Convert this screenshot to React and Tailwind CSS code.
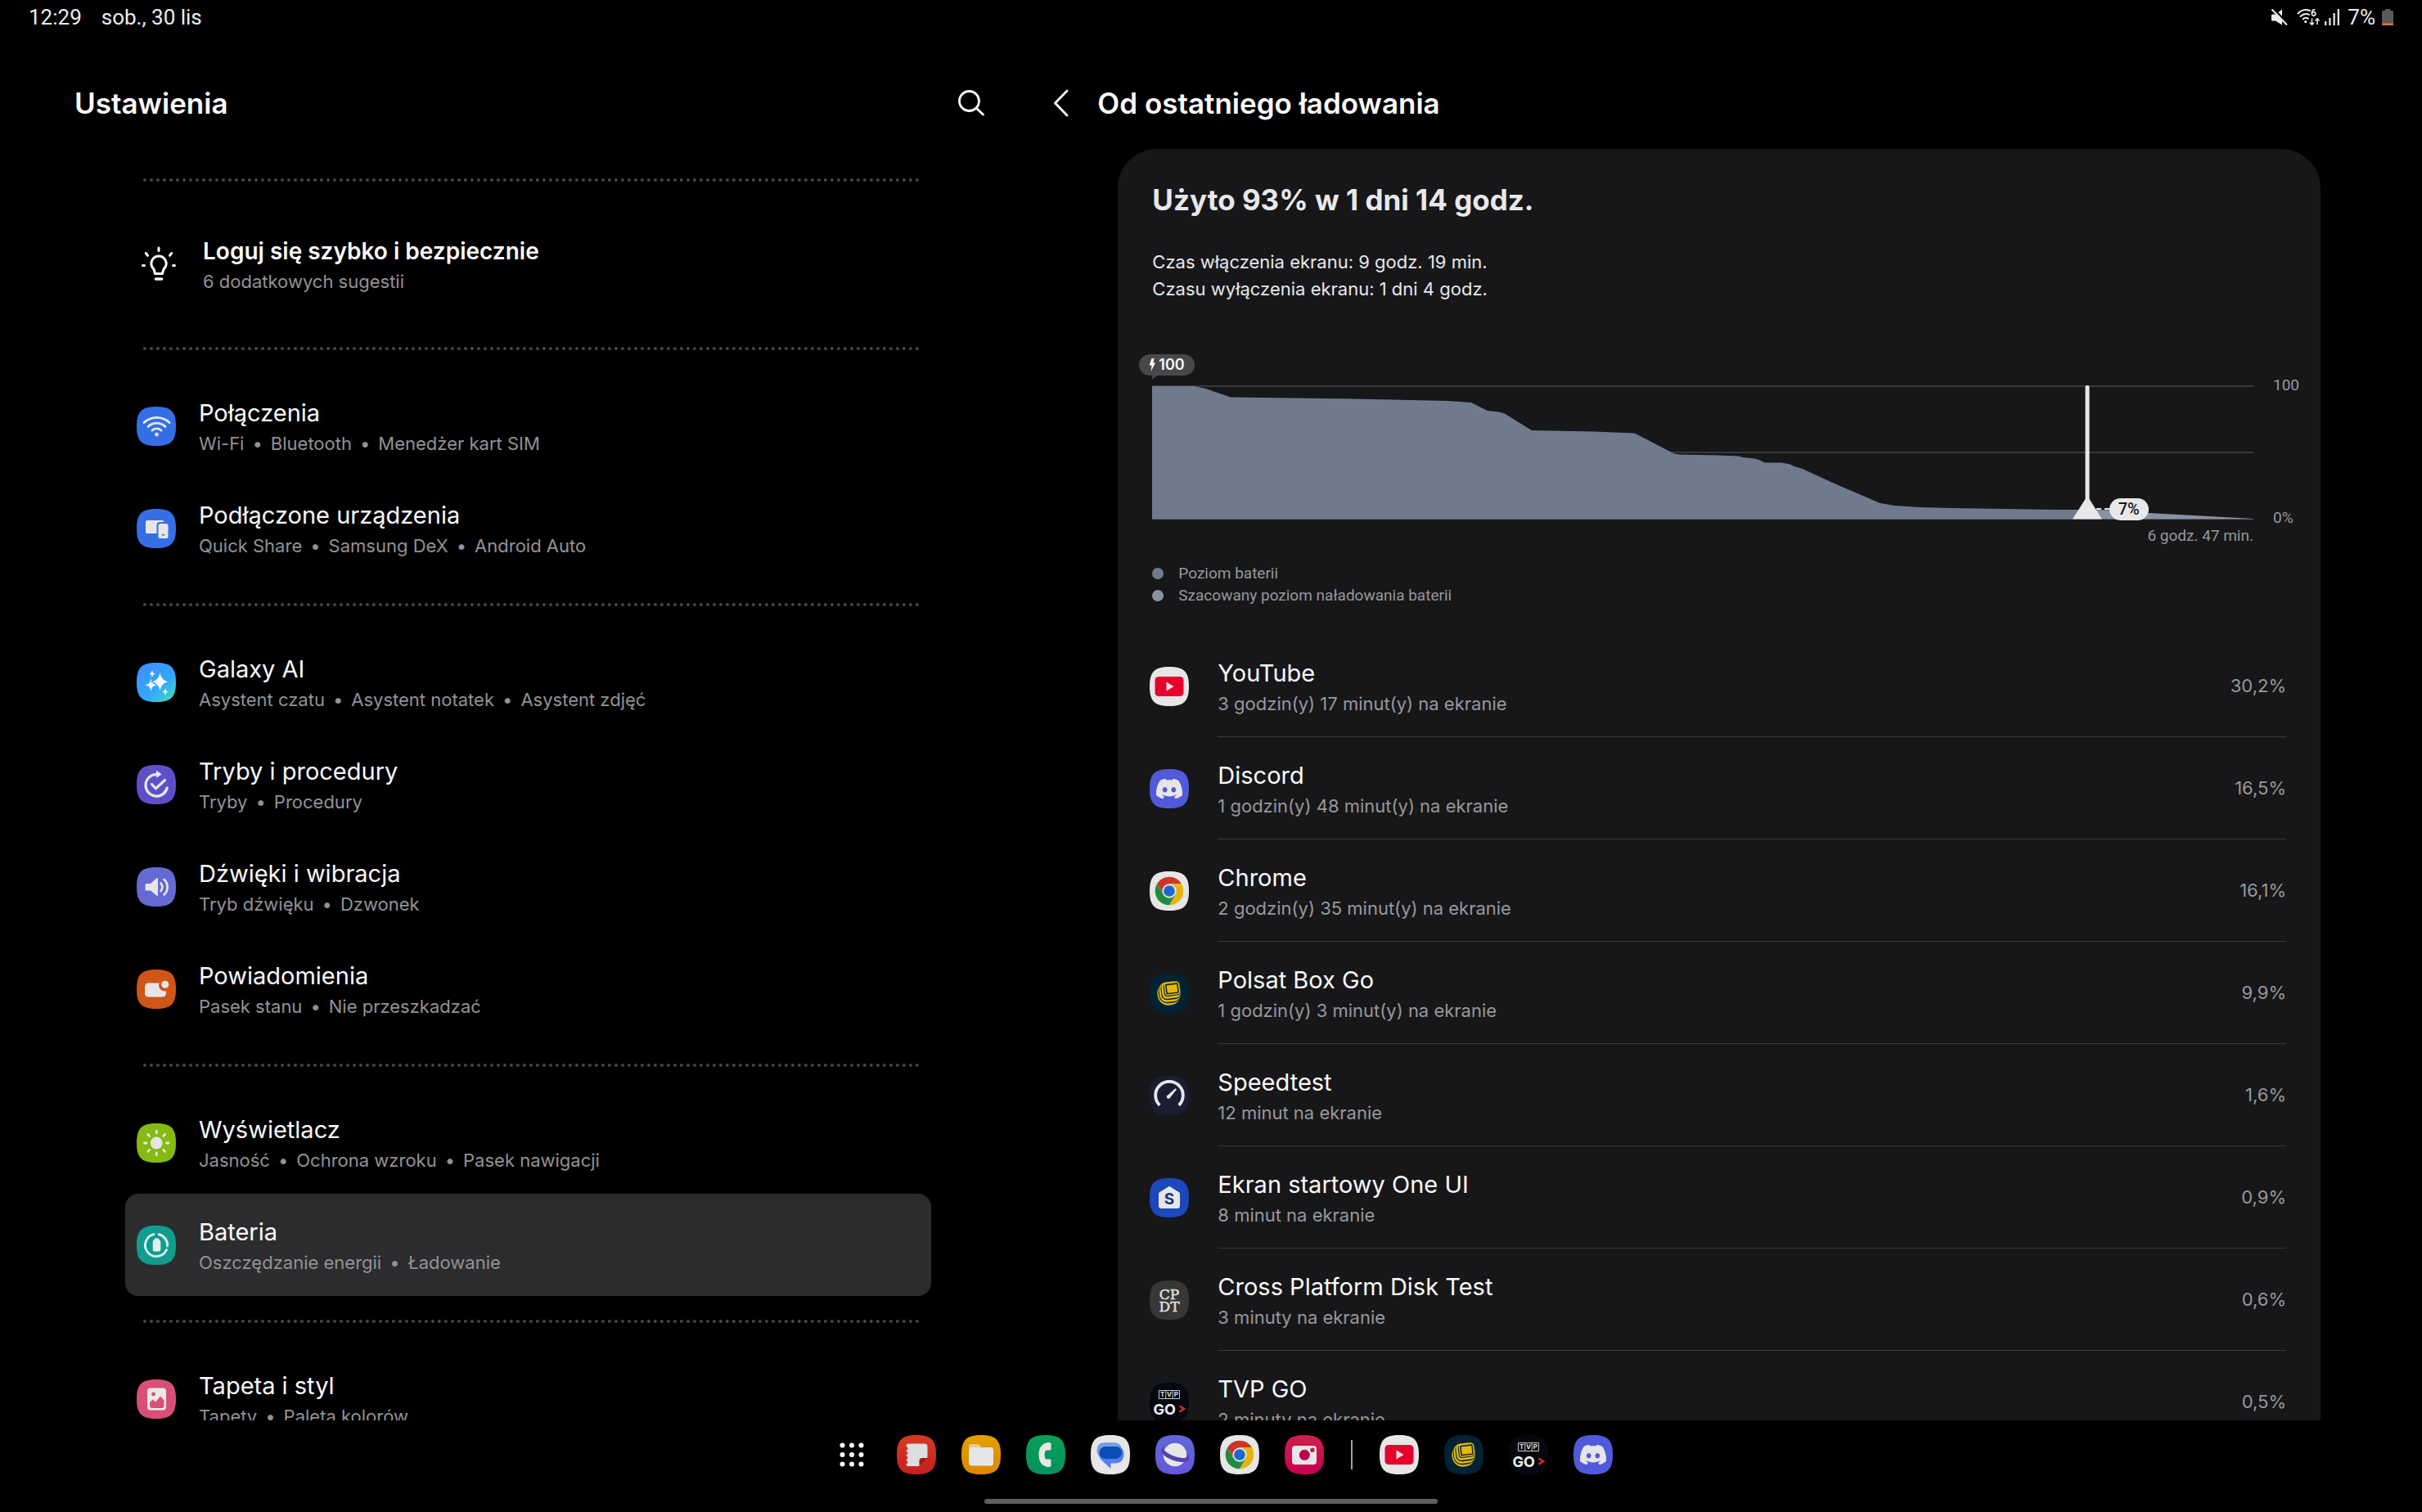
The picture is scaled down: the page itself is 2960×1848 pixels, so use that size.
import React from "react";
import { SiDiscord } from "react-icons/si";

const SQUIRCLE = "M24 0C42 0 48 6 48 24S42 48 24 48 0 42 0 24 6 0 24 0Z";

function Squircle({ fill, children }) {
  return (
    <svg viewBox="0 0 48 48" className="size-12 shrink-0" aria-hidden="true">
      <path d={SQUIRCLE} fill={fill} />
      {children}
    </svg>
  );
}

/* ---------- settings icons ---------- */

const WifiIcon = () => (
  <Squircle fill="#356fe6">
    <g fill="none" stroke="#e8e8ea" strokeWidth="2.8" strokeLinecap="round">
      <path d="M9 19.6C17.5 11.4 31.500 11.400 40 19.600" />
      <path d="M14 24.400C20 18.700 29 18.700 35 24.400" />
      <path d="M19 29C22.300 26.200 26.700 26.200 30 29" />
    </g>
    <circle cx="24.500" cy="34" r="2.400" fill="#e8e8ea" />
  </Squircle>
);

const DevicesIcon = () => (
  <Squircle fill="#356fe6">
    <rect x="11" y="14" width="22" height="16" rx="1.5" fill="#e6e6e8" />
    <rect x="24.500" y="16" width="16" height="22" rx="4" fill="#356fe6" />
    <rect x="26.500" y="18" width="12" height="18" rx="2.500" fill="#e6e6e8" />
    <rect x="30.500" y="31" width="4" height="1.600" rx="0.8" fill="#356fe6" />
  </Squircle>
);

const GalaxyAiIcon = () => (
  <Squircle fill="url(#galaxy-ai)">
    <defs>
      <linearGradient id="galaxy-ai" x1="0.1" y1="0" x2="0.9" y2="1">
        <stop offset="0" stopColor="#3f8dff" />
        <stop offset="0.6" stopColor="#30a8ff" />
        <stop offset="1" stopColor="#45dcb8" />
      </linearGradient>
    </defs>
    <g fill="#f2f8ff">
      <path d="M17.500 19.500C18.900 25 19.500 26 25 27.300 19.500 28.600 18.900 29.600 17.500 35 16.100 29.600 15.500 28.600 10 27.300 15.500 26 16.100 25 17.500 19.500Z" />
      <path d="M28.500 11C31 19.500 32 20.800 39.500 23.300 32 25.800 31 27.100 28.500 35.500 26 27.100 25 25.800 17.500 23.300 25 20.800 26 19.500 28.500 11Z" stroke="#34a0ff" strokeWidth="1" />
      <path d="M19 9C19.900 12.300 20.400 12.800 23.200 13.500 20.400 14.200 19.900 14.700 19 18 18.100 14.700 17.600 14.200 14.800 13.500 17.600 12.800 18.100 12.300 19 9Z" />
      <path d="M35 31C35.900 34.300 36.400 34.800 39.200 35.500 36.400 36.200 35.900 36.700 35 40 34.100 36.700 33.600 36.200 30.800 35.500 33.600 34.800 34.100 34.300 35 31Z" />
    </g>
  </Squircle>
);

const RoutinesIcon = () => (
  <Squircle fill="#5e4fc9">
    <g fill="none" stroke="#e6e6ea" strokeWidth="3.200" strokeLinecap="round" strokeLinejoin="round">
      <path d="M24 11.500A13.300 13.300 0 1 0 37.200 28" />
      <path d="M18.500 23.500 23.300 28.800 34.500 18.500" />
    </g>
    <path d="M24.500 7.500 30 11.300 24.500 15Z" fill="#e6e6ea" stroke="#e6e6ea" strokeLinejoin="round" />
  </Squircle>
);

const SoundIcon = () => (
  <Squircle fill="#6469d3">
    <path d="M10.500 21.500Q10.500 20 12 20H17L24.500 13.200Q26 12.300 26 14V34Q26 35.700 24.500 34.800L17 28.500H12Q10.500 28.500 10.500 27Z" fill="#e6e6ea" />
    <g fill="none" stroke="#e6e6ea" strokeWidth="2.600" strokeLinecap="round">
      <path d="M29.500 19.500C32 22 32 26.500 29.500 29" />
      <path d="M33.500 15C39 20 39 28.500 33.500 33.500" />
    </g>
  </Squircle>
);

const NotificationsIcon = () => (
  <Squircle fill="#d05518">
    <rect x="10" y="16.500" width="26" height="17" rx="4.500" fill="#e6e6e6" />
    <circle cx="34.500" cy="19" r="7.500" fill="#d05518" />
    <circle cx="34.800" cy="18.300" r="4.500" fill="#e6e6e6" />
  </Squircle>
);

const DisplayIcon = () => (
  <Squircle fill="#86b912">
    <circle cx="24.200" cy="24" r="7.400" fill="#e6e6e6" />
    <g stroke="#e6e6e6" strokeWidth="2.800" strokeLinecap="round">
      <path d="M24.200 9.500V12M24.200 36V38.500M9.500 24H12M36.400 24H39M13.800 13.600 15.600 15.400M32.800 32.600 34.600 34.400M34.600 13.600 32.800 15.400M15.600 32.600 13.800 34.400" />
    </g>
  </Squircle>
);

const BatteryIcon = () => (
  <Squircle fill="#119d8e">
    <g fill="none" stroke="#e2f0ee" strokeWidth="2.800" strokeLinecap="round">
      <path d="M21 10.700A13.600 13.600 0 1 0 36.500 29.500" />
      <path d="M27 10.700A13.600 13.600 0 0 1 37.600 25" />
    </g>
    <path d="M21.500 17.600V17Q21.500 15.600 23 15.600H26Q27.500 15.600 27.500 17V17.600Q29.300 18 29.300 20V29.500Q29.300 31.600 27.200 31.600H21.800Q19.700 31.600 19.700 29.500V20Q19.700 18 21.500 17.600Z" fill="#e2f0ee" />
  </Squircle>
);

const WallpaperIcon = () => (
  <Squircle fill="#d85077">
    <rect x="13" y="10.500" width="23" height="27" rx="4" fill="#eaeaea" />
    <circle cx="20.500" cy="18" r="2.400" fill="#d85077" />
    <path d="M16 31.500V28L19.800 24.500 23 27.500 29 20.500 33.500 25.500V32Q33.500 35 30.500 35H19Q16 35 16 31.500Z" fill="#d85077" />
  </Squircle>
);

const BulbIcon = () => (
  <svg viewBox="0 0 48 48" className="size-12 shrink-0" aria-hidden="true">
    <g fill="none" stroke="#fafafa" strokeWidth="3" strokeLinecap="round" strokeLinejoin="round">
      <path d="M19.500 34.500 18.200 29.500C15.800 27 14.800 24.800 14.800 22.300A9.200 9.200 0 0 1 33.200 22.300C33.200 24.800 32.200 27 29.800 29.500L28.500 34.500Z" />
      <path d="M24 3V6.500M8.300 9.500 10.500 12.300M39.700 9.500 37.500 12.300M4.500 24.500H6.500M41.500 24.500H43.500" />
      <path d="M20.500 41H27.500" strokeWidth="3.600" />
    </g>
  </svg>
);

/* ---------- app icons ---------- */

const YouTubeIcon = () => (
  <Squircle fill="#e6e6e6">
    <rect x="6.500" y="12" width="35" height="24" rx="4.500" fill="#e8002d" />
    <path d="M20.500 18.600V29.400L29.500 24Z" fill="#f4dfe3" />
  </Squircle>
);

const DiscordIcon = () => (
  <Squircle fill="#505ada">
    <SiDiscord x="8" y="8" size={32} color="#e6e6e6" />
  </Squircle>
);

const ChromeIcon = () => (
  <Squircle fill="#e6e6e6">
    <path d="M9.020 15.350A17.300 17.300 0 0 1 38.980 15.350L24 15.350 24 24 16.510 28.330Z" fill="#cc3529" />
    <path d="M38.980 15.350A17.300 17.300 0 0 1 24 41.300L31.490 28.330 24 24V15.350Z" fill="#e5b50f" />
    <path d="M24 41.300A17.300 17.300 0 0 1 9.020 15.350L16.510 28.330 24 24 31.490 28.330Z" fill="#218c40" />
    <circle cx="24" cy="24" r="8.650" fill="#e6e6e6" />
    <circle cx="24" cy="24" r="6.800" fill="#1b68d0" />
  </Squircle>
);

const PolsatIcon = () => (
  <Squircle fill="#032233">
    <g transform="rotate(-7 24 24)">
      <rect x="9.500" y="10" width="28" height="28.500" rx="13" fill="#dfb91f" />
      <rect x="11" y="9" width="27.500" height="27" rx="10.500" fill="#032233" />
      <rect x="12" y="10" width="26" height="24.500" rx="9" fill="#dfb91f" />
      <rect x="14.200" y="10.500" width="24" height="21.500" rx="7" fill="#032233" />
      <rect x="15.300" y="10.300" width="22.500" height="20" rx="5.500" fill="#e2b91a" />
      <rect x="17.700" y="11.800" width="20" height="15.800" rx="3.500" fill="#032233" />
      <rect x="18.800" y="11" width="18.700" height="15.600" rx="3" fill="#e5b90c" />
      <rect x="20.300" y="12.500" width="15.700" height="12.600" rx="1.500" fill="#032233" />
      <rect x="21.800" y="14" width="12.700" height="9.600" rx="0.800" fill="#e8b800" />
    </g>
  </Squircle>
);

const SpeedtestIcon = () => (
  <Squircle fill="#1c1c33">
    <path d="M12.300 35.800A16.800 16.800 0 1 1 35.700 35.800" fill="none" stroke="#e8e8ea" strokeWidth="3.800" />
    <path d="M31.500 15.200 33 16.600 24.500 27.200Q22.800 28.500 21.300 27.100 20.200 25.500 21.300 24.200Z" fill="#e8e8ea" />
  </Squircle>
);

const OneUiHomeIcon = () => (
  <Squircle fill="#1b48ba">
    <path d="M24 9.800 36 17.200Q37 18 37 19.200V33.500Q37 37 33.500 37H14.500Q11 37 11 33.500V19.200Q11 18 12 17.200Z" fill="#e6e6e6" />
    <text x="24" y="32" textAnchor="middle" className="font-['Inter',sans-serif] text-[19px] font-bold" fill="#16388c">S</text>
  </Squircle>
);

const CpdtIcon = () => (
  <Squircle fill="#373737">
    <g className="font-['DejaVu_Serif',serif] text-[17px]" fill="#e0e0e0" stroke="#e0e0e0" strokeWidth="0.500" textAnchor="middle">
      <text x="24" y="23">CP</text>
      <text x="24" y="37.500">DT</text>
    </g>
  </Squircle>
);

const TvpGoIcon = () => (
  <Squircle fill="#05080f">
    <g fill="none" stroke="#c9cbd0">
      <path d="M11.500 9.500H36.500V19.500H11.500ZM19.800 9.500V19.500M28.200 9.500V19.500" />
    </g>
    <g className="font-['Inter',sans-serif] text-[8px] font-bold" fill="#e0e0e0" textAnchor="middle">
      <text x="15.700" y="17.400">T</text>
      <text x="24" y="17.400">V</text>
      <text x="32.300" y="17.400">P</text>
    </g>
    <text x="4.500" y="38.500" className="font-['Inter',sans-serif] text-[18px] font-bold" fill="#f0f0f0">GO</text>
    <path d="M36.500 28.500 42 32 36.500 35.800" fill="none" stroke="#d8262c" strokeWidth="2.600" />
  </Squircle>
);

const NotesIcon = () => (
  <Squircle fill="url(#notes)">
    <defs>
      <linearGradient id="notes" x1="0" y1="0" x2="0" y2="1">
        <stop offset="0" stopColor="#d63a22" />
        <stop offset="1" stopColor="#c51f1f" />
      </linearGradient>
    </defs>
    <path d="M14 10.500H34Q37.500 10.500 37.500 14V27L27 38H14Q11.500 38 11.500 35.500 13.500 34.500 13.500 33 13.500 31.500 11 30.500 13.500 29 13.500 27.500 13.500 26 11 25 13.500 23.500 13.500 22 13.500 20.500 11 19.500 13.500 18 13.500 16.500 13.500 15 11.500 13.500 11.500 10.500 14 10.500Z" fill="#dedede" />
    <path d="M37.500 28H31Q27.500 28 27.500 31.500V38Z" fill="#a31616" />
  </Squircle>
);

const FilesIcon = () => (
  <Squircle fill="url(#files)">
    <defs>
      <linearGradient id="files" x1="0" y1="0" x2="0" y2="1">
        <stop offset="0" stopColor="#e3a000" />
        <stop offset="1" stopColor="#dd8800" />
      </linearGradient>
    </defs>
    <path d="M9 13.500Q9 11 11.500 11H20Q22 11 23 13L24.500 16H9Z" fill="#e9c98c" />
    <rect x="9" y="15" width="30" height="22.500" rx="3.500" fill="#e6e6e6" />
  </Squircle>
);

const PhoneIcon = () => (
  <Squircle fill="url(#phone)">
    <defs>
      <linearGradient id="phone" x1="0" y1="0" x2="0" y2="1">
        <stop offset="0" stopColor="#0a9f55" />
        <stop offset="1" stopColor="#07915f" />
      </linearGradient>
    </defs>
    <path d="M26.500 9Q30.500 8.500 30.500 11V17Q30.500 18.500 29 18.500H25.500Q23.500 18.500 23 20.500 22.300 24 23 27.500 23.500 29.500 25.500 29.500H29Q30.500 29.500 30.500 31V37Q30.500 39.500 26.500 39 15.500 37 15.500 24T26.500 9Z" fill="#e6e6e6" />
  </Squircle>
);

const MessagesIcon = () => (
  <Squircle fill="#e6e6e6">
    <path d="M17 9H28Q34 9 37.500 14H20Q12 14 10.500 26 7.500 23 7.500 18.500 7.500 9 17 9Z" fill="#7a9ee6" />
    <path d="M20 14H36Q40.500 17.500 40.500 23.500 40.500 34 30 34.500H24.500V41L12 29.500Q8.500 24 10.500 19.500 13 14 20 14Z" fill="#5083e8" />
    <rect x="10.500" y="14" width="27.500" height="15" rx="7.500" fill="#0a4fb8" />
  </Squircle>
);

const InternetIcon = () => (
  <Squircle fill="url(#internet)">
    <defs>
      <linearGradient id="internet" x1="0" y1="0" x2="0" y2="1">
        <stop offset="0" stopColor="#6068d6" />
        <stop offset="1" stopColor="#6656d8" />
      </linearGradient>
    </defs>
    <circle cx="24" cy="24" r="14.300" fill="#e6e6e6" />
    <path d="M11 13.500C5 15.500 6 22.500 14 27.200 24 33 37.500 35 40.500 31.200 42.500 28.500 40.500 25 37.800 22.500 39.500 26.500 38 28.500 33 28 26 27.500 16.500 23.500 12.500 20 9.500 17.300 9.500 15 11 13.500Z" fill="#5444b0" />
  </Squircle>
);

const CameraIcon = () => (
  <Squircle fill="url(#camera)">
    <defs>
      <linearGradient id="camera" x1="0" y1="0" x2="0" y2="1">
        <stop offset="0" stopColor="#d0204a" />
        <stop offset="1" stopColor="#c60054" />
      </linearGradient>
    </defs>
    <rect x="9" y="13" width="30" height="23" rx="4" fill="#e6e6e6" />
    <circle cx="24.300" cy="24.300" r="6.500" fill="#bd0050" />
    <circle cx="34" cy="18.300" r="2.700" fill="#cc1a4a" />
  </Squircle>
);

const AppsIcon = () => (
  <svg viewBox="0 0 48 48" className="size-12" aria-hidden="true" fill="#ffffff">
    {[12.5, 24, 35.5].map((y) =>
      [12.5, 24, 35.5].map((x) => <circle key={x + "-" + y} cx={x} cy={y} r="3" />)
    )}
  </svg>
);

/* ---------- data ---------- */

const sections = [
  [
    { icon: WifiIcon, title: "Połączenia", items: ["Wi-Fi", "Bluetooth", "Menedżer kart SIM"] },
    { icon: DevicesIcon, title: "Podłączone urządzenia", items: ["Quick Share", "Samsung DeX", "Android Auto"] },
  ],
  [
    { icon: GalaxyAiIcon, title: "Galaxy AI", items: ["Asystent czatu", "Asystent notatek", "Asystent zdjęć"] },
    { icon: RoutinesIcon, title: "Tryby i procedury", items: ["Tryby", "Procedury"] },
    { icon: SoundIcon, title: "Dźwięki i wibracja", items: ["Tryb dźwięku", "Dzwonek"] },
    { icon: NotificationsIcon, title: "Powiadomienia", items: ["Pasek stanu", "Nie przeszkadzać"] },
  ],
  [
    { icon: DisplayIcon, title: "Wyświetlacz", items: ["Jasność", "Ochrona wzroku", "Pasek nawigacji"] },
    { icon: BatteryIcon, title: "Bateria", items: ["Oszczędzanie energii", "Ładowanie"], active: true },
  ],
  [{ icon: WallpaperIcon, title: "Tapeta i styl", items: ["Tapety", "Paleta kolorów"] }],
];

const usage = [
  { icon: YouTubeIcon, name: "YouTube", time: "3 godzin(y) 17 minut(y) na ekranie", share: "30,2%" },
  { icon: DiscordIcon, name: "Discord", time: "1 godzin(y) 48 minut(y) na ekranie", share: "16,5%" },
  { icon: ChromeIcon, name: "Chrome", time: "2 godzin(y) 35 minut(y) na ekranie", share: "16,1%" },
  { icon: PolsatIcon, name: "Polsat Box Go", time: "1 godzin(y) 3 minut(y) na ekranie", share: "9,9%" },
  { icon: SpeedtestIcon, name: "Speedtest", time: "12 minut na ekranie", share: "1,6%" },
  { icon: OneUiHomeIcon, name: "Ekran startowy One UI", time: "8 minut na ekranie", share: "0,9%" },
  { icon: CpdtIcon, name: "Cross Platform Disk Test", time: "3 minuty na ekranie", share: "0,6%" },
  { icon: TvpGoIcon, name: "TVP GO", time: "2 minuty na ekranie", share: "0,5%" },
];

const dockApps = [
  ["Samsung Notes", NotesIcon],
  ["Moje pliki", FilesIcon],
  ["Telefon", PhoneIcon],
  ["Wiadomości", MessagesIcon],
  ["Internet", InternetIcon],
  ["Chrome", ChromeIcon],
  ["Aparat", CameraIcon],
];

const recentApps = [
  ["YouTube", YouTubeIcon],
  ["Polsat Box Go", PolsatIcon],
  ["TVP GO", TvpGoIcon],
  ["Discord", DiscordIcon],
];

/* ---------- page parts ---------- */

function StatusBar() {
  return (
    <div className="flex h-[42px] shrink-0 items-center justify-between pr-[35px] pl-[35px] font-['Roboto',sans-serif] text-[26px] text-[#ececec]">
      <div className="flex gap-6">
        <span>12:29</span>
        <span>sob., 30 lis</span>
      </div>
      <div className="flex items-center">
        <svg viewBox="0 0 22 22" className="mr-2.5 size-[22px]" aria-hidden="true">
          <path d="M1 8.500Q1 7.500 2 7.500H6L14 1.500V20.500L6 15.500H2Q1 15.500 1 14.500Z" fill="#ececec" />
          <path d="M3.200 0.200 21.800 19.800" stroke="#000000" strokeWidth="2.400" />
          <path d="M1.500 1.500 20 20.500" stroke="#ececec" strokeWidth="2" />
        </svg>
        <svg viewBox="0 0 28 22" className="mr-1.5 h-[22px] w-7" aria-hidden="true">
          <g fill="none" stroke="#ececec" strokeWidth="2" strokeLinecap="round">
            <path d="M1.500 6.500C5.500 2.300 11 1.300 16 3" />
            <path d="M4.500 10C7.500 7 11.500 6.300 15 7.800" />
            <path d="M7.500 13.200C9.500 11.400 12 11.400 14 12.800" />
            <path d="M18.500 13V20M16.300 18 18.500 20.200 20.700 18M25 19.500V13M22.800 15 25 12.800 27.200 15" strokeWidth="1.600" />
          </g>
          <circle cx="10.700" cy="16.600" r="1.600" fill="#ececec" />
          <text x="17" y="9.500" className="font-['Roboto',sans-serif] text-[12px] font-bold" fill="#ececec">6</text>
        </svg>
        <svg viewBox="0 0 18 20" className="mr-2.5 h-5 w-[18px]" aria-hidden="true">
          <path d="M1.200 15V20M6.400 11V20M11.600 5V20M16.800 0V20" stroke="#ececec" strokeWidth="2.200" />
        </svg>
        <span>7%</span>
        <svg viewBox="0 0 14 20" className="ml-2 h-5 w-3.5" aria-hidden="true">
          <path d="M4 0H10V2H12.500Q14 2 14 3.500V18.500Q14 20 12.500 20H1.500Q0 20 0 18.500V3.500Q0 2 1.500 2H4Z" fill="#5a5a5a" />
          <path d="M0 17.500H14V18.500Q14 20 12.500 20H1.500Q0 20 0 18.500Z" fill="#e0703f" />
        </svg>
      </div>
    </div>
  );
}

function DottedDivider() {
  return <hr className="mt-[29px] mr-3.5 mb-[30px] ml-[22px] border-0 border-t-4 border-dotted border-[#464648]" />;
}

function SettingsRow({ icon: Icon, title, items, active }) {
  return (
    <li>
      <a
        href="#"
        aria-current={active ? "page" : undefined}
        className={
          active
            ? "flex h-[125px] items-center gap-7 rounded-2xl bg-[#2c2c2e] pl-3.5"
            : "flex h-[125px] items-center gap-7 rounded-2xl pl-3.5"
        }
      >
        <Icon />
        <span className="flex flex-col pt-0.5">
          <span className="text-[29px] leading-10 text-[#fafafa]">{title}</span>
          <span className="flex gap-2.5 text-[22px] leading-[34px] text-[#929295]">
            {items.map((item, i) => (
              <React.Fragment key={item}>
                {i > 0 && <span aria-hidden="true">•</span>}
                <span>{item}</span>
              </React.Fragment>
            ))}
          </span>
        </span>
      </a>
    </li>
  );
}

function SettingsPane() {
  return (
    <nav className="flex min-h-0 flex-col" aria-label="Ustawienia">
      <header className="flex h-[140px] shrink-0 items-center justify-between pt-7 pr-[28px] pl-[91px]">
        <h1 className="text-[35px] leading-[48px] font-semibold text-[#fafafa]">Ustawienia</h1>
        <button type="button" aria-label="Szukaj" className="flex size-9 items-center justify-center">
          <svg viewBox="0 0 36 36" className="size-9" fill="none" stroke="#fafafa" strokeWidth="2.800" strokeLinecap="round" aria-hidden="true">
            <circle cx="15.500" cy="15.500" r="12" />
            <path d="M24.500 24.500 32.500 32" />
          </svg>
        </button>
      </header>
      <div className="min-h-0 flex-1 overflow-hidden pt-[7px] pr-[95px] pl-[153px]">
        <DottedDivider />
        <a href="#" className="flex h-[143px] items-center gap-[30px] pl-[17px]">
          <BulbIcon />
          <span className="flex flex-col">
            <span className="text-[28px] leading-10 font-semibold text-[#fafafa]">Loguj się szybko i bezpiecznie</span>
            <span className="text-[22px] leading-[34px] text-[#929295]">6 dodatkowych sugestii</span>
          </span>
        </a>
        {sections.map((rows) => (
          <div key={rows[0].title}>
            <DottedDivider />
            <ul>
              {rows.map((row) => (
                <SettingsRow key={row.title} {...row} />
              ))}
            </ul>
          </div>
        ))}
      </div>
    </nav>
  );
}

function BatteryChart() {
  return (
    <div className="mt-[101px] flex gap-6 pr-6 pl-[42px] font-['Roboto',sans-serif] text-[19px] leading-6 text-[#98989b]">
      <div className="min-w-0 flex-1">
        <div className="relative">
          <svg viewBox="0 0 1346 164" preserveAspectRatio="none" className="block h-[164px] w-full" role="img" aria-label="Poziom baterii">
            <path d="M0 1H1346M0 82H1346" stroke="#38383a" strokeWidth="2" />
            <path
              d="M0 1H51L64 3.500 96 14.500 248 16.500 362 19 390 21 410 31 424 32.500 431 34.500 464 55 541 56.500 590 58.500 638 83.500 645 84.500 692 85.500 717 86.500 722 88 737 89.500 743 91.500 749 94.500H769L780 96.500 785 99 795 102 832 119 862 132 890 144 908 147 938 149 978 150 1106 152H1143V164H0Z"
              fill="#6f7b8d"
            />
            <path d="M1143 152 1180 152.500 1219 156 1346 163V164H1143Z" fill="#8792a2" />
            <path d="M0 163.500H1346" stroke="#5c6268" />
          </svg>
          <div className="absolute -top-[38px] -left-4 flex h-[26px] items-center gap-1 rounded-full bg-[#48484a] px-3 font-['Inter',sans-serif] text-[18px] font-semibold text-[#fafafa]">
            <svg viewBox="0 0 8 16" className="h-4 w-2" aria-hidden="true">
              <path d="M3.500 0H6.500L5.500 5.500H8L2.500 16 3.500 8.500H0.500Z" fill="#fafafa" />
            </svg>
            100
            <svg viewBox="0 0 6 5" className="absolute top-full left-4 h-[5px] w-1.5" aria-hidden="true">
              <path d="M0 0H6L0 5Z" fill="#48484a" />
            </svg>
          </div>
          <svg viewBox="0 0 36 164" className="absolute top-0 left-[84.9%] h-[164px] w-9 -translate-x-1/2" aria-hidden="true">
            <rect x="15.500" width="5" height="150" rx="2" fill="#e8e8ea" />
            <path d="M18 135 36 163.500H0Z" fill="#e8e8ea" />
          </svg>
          <div className="absolute -bottom-px left-[86.9%] h-[27px] rounded-full bg-[#e8e8ea] px-[11px] text-[20px] leading-[27px] font-medium text-[#171719] before:absolute before:top-3 before:right-full before:w-4 before:border-t-2 before:border-dashed before:border-[#e8e8ea]">
            7%
          </div>
        </div>
        <p className="mt-2 text-right">6 godz. 47 min.</p>
      </div>
      <div className="flex h-[164px] w-[34px] shrink-0 flex-col justify-between">
        <span className="-mt-3">100</span>
        <span className="-mb-2.5">0%</span>
      </div>
    </div>
  );
}

function UsageRow({ icon: Icon, name, time, share }) {
  return (
    <li className="group flex gap-[35px]">
      <span className="flex h-[125px] items-center">
        <Icon />
      </span>
      <div className="flex h-[125px] flex-1 items-center justify-between border-b border-[#38383a] group-last:border-transparent">
        <div className="pt-1">
          <h3 className="text-[29px] leading-10 text-[#fafafa]">{name}</h3>
          <p className="text-[22px] leading-[34px] text-[#98989b]">{time}</p>
        </div>
        <span className="text-[22px] text-[#98989b]">{share}</span>
      </div>
    </li>
  );
}

function BatteryPane() {
  return (
    <main className="flex min-h-0 flex-col">
      <header className="flex h-[140px] shrink-0 items-center gap-7 pt-7 pl-[48px]">
        <button type="button" aria-label="Wstecz" className="flex h-9 w-8 items-center justify-center">
          <svg viewBox="0 0 32 36" className="h-9 w-8" fill="none" stroke="#fafafa" strokeWidth="2.800" strokeLinecap="round" strokeLinejoin="round" aria-hidden="true">
            <path d="M23 3 8.500 18 23 33" />
          </svg>
        </button>
        <h2 className="text-[35px] leading-[48px] font-semibold text-[#fafafa]">Od ostatniego ładowania</h2>
      </header>
      <div className="min-h-0 flex-1 overflow-hidden pr-[124px] pl-[133px]">
        <section className="rounded-t-[48px] bg-[#171719] pt-[38px]">
          <div className="px-[42px] text-[#e8e8ea]">
            <h2 className="text-[35px] leading-[48px] font-bold">Użyto 93% w 1 dni 14 godz.</h2>
            <p className="mt-9 text-[22px] leading-[33px]">Czas włączenia ekranu: 9 godz. 19 min.</p>
            <p className="text-[22px] leading-[33px]">Czasu wyłączenia ekranu: 1 dni 4 godz.</p>
          </div>
          <BatteryChart />
          <ul className="mt-5 px-[42px] font-['Roboto',sans-serif] text-[19px] leading-[27px] text-[#98989b]">
            <li className="flex items-center gap-[18px]">
              <span className="size-3.5 rounded-full bg-[#6f7b8d]" />
              Poziom baterii
            </li>
            <li className="flex items-center gap-[18px]">
              <span className="size-3.5 rounded-full bg-[#8792a2]" />
              Szacowany poziom naładowania baterii
            </li>
          </ul>
          <ul className="mt-[35px] pr-[42px] pl-[39px]">
            {usage.map((app) => (
              <UsageRow key={app.name} {...app} />
            ))}
          </ul>
        </section>
      </div>
    </main>
  );
}

function DockButton({ label, icon: Icon }) {
  return (
    <button type="button" aria-label={label}>
      <Icon />
    </button>
  );
}

function Taskbar() {
  return (
    <footer className="flex h-28 shrink-0 flex-col items-center justify-between pt-[18px] pb-2.5">
      <div className="flex items-center gap-[31px] pl-7">
        <DockButton label="Aplikacje" icon={AppsIcon} />
        {dockApps.map(([label, icon]) => (
          <DockButton key={label} label={label} icon={icon} />
        ))}
        <span className="mx-0.5 h-9 w-0.5 bg-[#a0a0a0]" />
        {recentApps.map(([label, icon]) => (
          <DockButton key={label} label={label} icon={icon} />
        ))}
      </div>
      <div className="h-1.5 w-[554px] rounded-full bg-[#5f5f5f]" />
    </footer>
  );
}

export default function App() {
  return (
    <div className="flex h-screen flex-col overflow-hidden bg-black font-['Inter',sans-serif]">
      <StatusBar />
      <div className="grid min-h-0 flex-1 grid-cols-[5fr_7fr]">
        <SettingsPane />
        <BatteryPane />
      </div>
      <Taskbar />
    </div>
  );
}
